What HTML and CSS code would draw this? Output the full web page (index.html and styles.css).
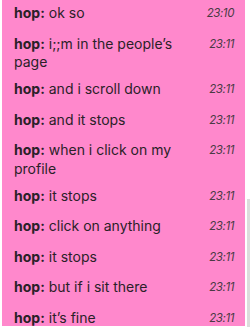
FILE: index.html
```html
<!DOCTYPE html>
<html>
<head>
<meta charset="utf-8">
<link rel="stylesheet" href="styles.css">
</head>
<body>
<div class="frame">
  <div class="panel">
    <div class="row"><div class="msg"><b>hop:</b> ok so</div><div class="time">23:10</div></div>
    <div class="row"><div class="msg"><b>hop:</b> i;;m in the people’s<br>page</div><div class="time">23:11</div></div>
    <div class="row"><div class="msg"><b>hop:</b> and i scroll down</div><div class="time">23:11</div></div>
    <div class="row"><div class="msg"><b>hop:</b> and it stops</div><div class="time">23:11</div></div>
    <div class="row"><div class="msg"><b>hop:</b> when i click on my<br>profile</div><div class="time">23:11</div></div>
    <div class="row"><div class="msg"><b>hop:</b> it stops</div><div class="time">23:11</div></div>
    <div class="row"><div class="msg"><b>hop:</b> click on anything</div><div class="time">23:11</div></div>
    <div class="row"><div class="msg"><b>hop:</b> it stops</div><div class="time">23:11</div></div>
    <div class="row"><div class="msg"><b>hop:</b> but if i sit there</div><div class="time">23:11</div></div>
    <div class="row"><div class="msg"><b>hop:</b> it’s fine</div><div class="time">23:11</div></div>
  </div>
  <div class="track"><div class="thumb"></div></div>
</div>
</body>
</html>
```

FILE: styles.css
```css
html, body {
  margin: 0;
  padding: 0;
  background: #ffffff;
}
.frame {
  display: flex;
  height: 327px;
  overflow: hidden;
  background: #ffffff;
}
.panel {
  width: 243px;
  height: 326px;
  margin-left: 2px;
  background: #ff88cc;
  overflow: hidden;
  font-family: Inter, "Noto Sans", sans-serif;
  color: #2b2128;
}
.row {
  display: flex;
  align-items: flex-start;
  justify-content: space-between;
  gap: 8px;
  padding: 4px 11px 4.5px 12px;
}
.msg {
  flex: 1;
  font-size: 14px;
  line-height: 18.5px;
}
.msg b {
  font-weight: 700;
}
.time {
  font-size: 11.5px;
  font-style: italic;
  line-height: 18.5px;
  padding-bottom: 3.5px;
  color: #4a3a44;
  letter-spacing: -0.4px;
}
.track {
  width: 5px;
  padding-top: 199px;
}
.thumb {
  margin-left: 2px;
  width: 3px;
  height: 128px;
  background: #dcdcdc;
}
```
